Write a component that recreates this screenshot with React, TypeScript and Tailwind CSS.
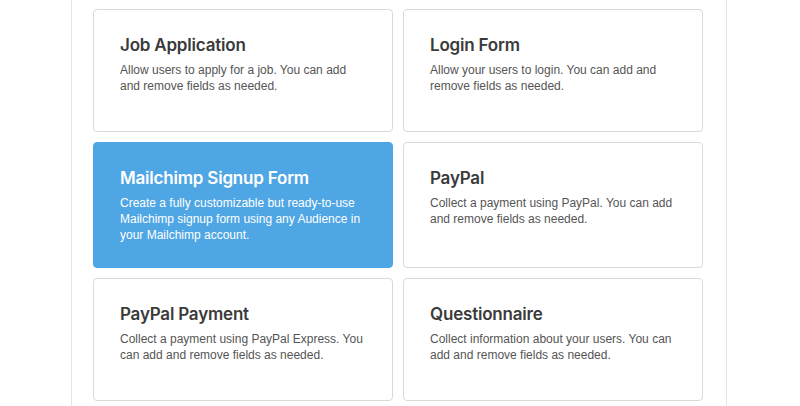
import React from 'react';

interface Template {
  title: string;
  description: string;
  active?: boolean;
}

const templates: Template[] = [
  { title: 'Job Application', description: 'Allow users to apply for a job. You can add and remove fields as needed.' },
  { title: 'Login Form', description: 'Allow your users to login. You can add and remove fields as needed.' },
  {
    title: 'Mailchimp Signup Form',
    description: 'Create a fully customizable but ready-to-use Mailchimp signup form using any Audience in your Mailchimp account.',
    active: true,
  },
  { title: 'PayPal', description: 'Collect a payment using PayPal. You can add and remove fields as needed.' },
  { title: 'PayPal Payment', description: 'Collect a payment using PayPal Express. You can add and remove fields as needed.' },
  { title: 'Questionnaire', description: 'Collect information about your users. You can add and remove fields as needed.' },
];

const TemplateCard: React.FC<{ item: Template }> = ({ item }) => (
  <button
    type="button"
    className={`${item.active
      ? 'bg-[#4fa6e4] border-[#4fa6e4] text-white'
      : 'bg-white border-[#d9d9d9] text-[#3a3a3a]'
      } min-h-[123px] rounded-[4px] border px-[26px] py-6 text-left flex flex-col cursor-pointer`}
  >
    <div className="font-['Inter',sans-serif] text-[17px] leading-[22px] font-semibold tracking-[-0.2px]">{item.title}</div>
    <div className={`${item.active ? 'text-white' : 'text-[#555]'} mt-[6px] text-[12px] leading-4`}>
      {item.description}
    </div>
  </button>
);

const App: React.FC = () => {
  return (
    <div className="w-[800px] h-[406px] overflow-hidden bg-white font-['Liberation_Sans',Arial,sans-serif]">
      {/* Template picker panel */}
      <div className="ml-[71px] w-[656px] h-[420px] border-x border-[#e4e4e4] bg-white pl-[21px] pr-[23px] pt-[9px]">
        <div className="grid grid-cols-2 gap-[10px]">
          {templates.map((t) => (
            <TemplateCard key={t.title} item={t} />
          ))}
        </div>
      </div>
    </div>
  );
};

export default App;
